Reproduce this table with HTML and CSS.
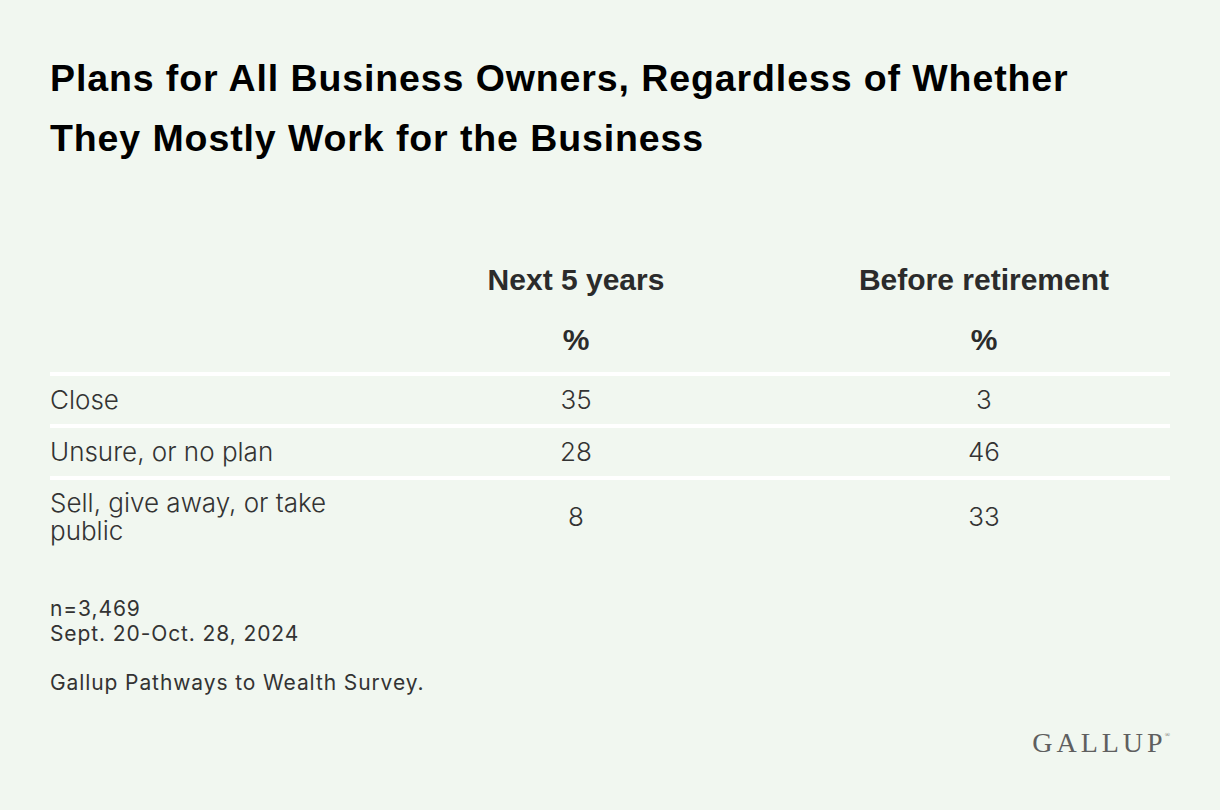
FILE: index.html
```html
<!DOCTYPE html>
<html>
<head>
<meta charset="utf-8">
<link rel="stylesheet" href="styles.css">
</head>
<body>
<div class="page">
  <h1 class="title">Plans for All Business Owners, Regardless of Whether They Mostly Work for the Business</h1>
  <div class="table">
    <div class="row head">
      <div class="cell label"></div>
      <div class="cell">Next 5 years</div>
      <div class="cell">Before retirement</div>
    </div>
    <div class="row unit">
      <div class="cell label"></div>
      <div class="cell">%</div>
      <div class="cell">%</div>
    </div>
    <div class="row data">
      <div class="cell label">Close</div>
      <div class="cell">35</div>
      <div class="cell">3</div>
    </div>
    <div class="row data">
      <div class="cell label">Unsure, or no plan</div>
      <div class="cell">28</div>
      <div class="cell">46</div>
    </div>
    <div class="row data last">
      <div class="cell label">Sell, give away, or take public</div>
      <div class="cell">8</div>
      <div class="cell">33</div>
    </div>
  </div>
  <div class="notes">
    <p>n=3,469<br>Sept. 20-Oct. 28, 2024</p>
    <p>Gallup Pathways to Wealth Survey.</p>
  </div>
  <div class="footer">
    <span class="logo">GALLUP<sup>®</sup></span>
  </div>
</div>
</body>
</html>
```

FILE: styles.css
```css
html, body {
  margin: 0;
  padding: 0;
  background: #f1f7f0;
}
.page {
  width: 1220px;
  height: 810px;
  box-sizing: border-box;
  padding: 48px 50px 0 50px;
  display: flex;
  flex-direction: column;
  font-family: Inter, "Liberation Sans", sans-serif;
  color: #333;
}
.title {
  margin: 0;
  font-family: "Liberation Sans", Arial, sans-serif;
  font-weight: 700;
  font-size: 37.5px;
  line-height: 60px;
  letter-spacing: 0.9px;
  color: #000;
  width: 1060px;
}
.table {
  margin-top: 81px;
  display: flex;
  flex-direction: column;
}
.row {
  display: grid;
  grid-template-columns: 304px 444px 372px;
  align-items: center;
}
.cell {
  text-align: center;
}
.cell.label {
  text-align: left;
}
.head,
.unit {
  font-family: "Liberation Sans", Arial, sans-serif;
  font-size: 30px;
  font-weight: 700;
  color: #2b2b2b;
}
.head {
  height: 62px;
}
.unit {
  height: 58px;
  padding-bottom: 3px;
  border-bottom: 4px solid #fff;
}
.data {
  font-size: 26px;
  font-weight: 300;
  line-height: 28px;
  min-height: 48px;
  border-bottom: 4px solid #fff;
}
.data.last {
  border-bottom: none;
  padding: 9px 0 11px;
}
.notes {
  margin-top: 40px;
  font-size: 21px;
  letter-spacing: 0.9px;
  line-height: 25px;
  color: #333;
}
.notes p {
  margin: 0 0 24px 0;
}
.footer {
  margin-top: auto;
  display: flex;
  justify-content: flex-end;
  padding-bottom: 51px;
}
.logo {
  font-family: "Liberation Serif", serif;
  font-size: 28px;
  color: #5f5f5f;
  letter-spacing: 4px;
}
.logo sup {
  font-size: 7px;
  vertical-align: 15px;
  margin-left: -2px;
  letter-spacing: 0;
}
```
